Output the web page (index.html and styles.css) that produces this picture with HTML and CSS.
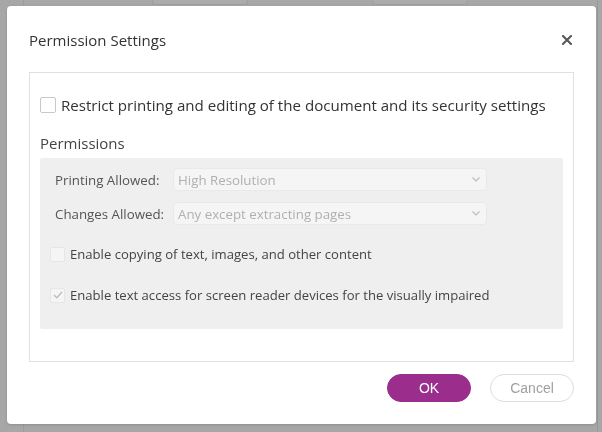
FILE: index.html
```html
<!DOCTYPE html>
<html>
<head>
<meta charset="utf-8">
<link rel="stylesheet" href="styles.css">
</head>
<body>
<div class="page">
  <div class="page-top">
    <div class="ghost-line"></div>
    <div class="ghost-box g1"></div>
    <div class="ghost-box g2"></div>
    <div class="ghost-edge"></div>
  </div>
</div>
<div class="dialog">
  <div class="header">
    <span class="title">Permission Settings</span>
    <span class="close">
      <svg width="10" height="10" viewBox="0 0 10 10"><path d="M1 1 L9 9 M9 1 L1 9" stroke="#555" stroke-width="2" stroke-linecap="square"/></svg>
    </span>
  </div>
  <div class="box">
    <label class="row main-check">
      <span class="cb"></span>
      <span>Restrict printing and editing of the document and its security settings</span>
    </label>
    <div class="section-title">Permissions</div>
    <div class="panel">
      <div class="field">
        <span class="field-label">Printing Allowed:</span>
        <div class="select"><span>High Resolution</span>
          <svg width="8" height="5" viewBox="0 0 8 5"><path d="M0.5 0.5 L4 4 L7.5 0.5" fill="none" stroke="#bdbdbd" stroke-width="1.2"/></svg>
        </div>
      </div>
      <div class="field second">
        <span class="field-label">Changes Allowed:</span>
        <div class="select"><span>Any except extracting pages</span>
          <svg width="8" height="5" viewBox="0 0 8 5"><path d="M0.5 0.5 L4 4 L7.5 0.5" fill="none" stroke="#bdbdbd" stroke-width="1.2"/></svg>
        </div>
      </div>
      <label class="row sub-check first">
        <span class="cb dis"></span>
        <span>Enable copying of text, images, and other content</span>
      </label>
      <label class="row sub-check second">
        <span class="cb dis">
          <svg width="10" height="8" viewBox="0 0 10 8"><path d="M1 4 L3.8 6.8 L9 1" fill="none" stroke="#bdbdbd" stroke-width="1.4"/></svg>
        </span>
        <span>Enable text access for screen reader devices for the visually impaired</span>
      </label>
    </div>
  </div>
  <div class="footer">
    <button class="btn ok">OK</button>
    <button class="btn cancel">Cancel</button>
  </div>
</div>
</body>
</html>
```
FILE: styles.css
```css
html, body {
  margin: 0;
  padding: 0;
  width: 602px;
  height: 432px;
  overflow: hidden;
}
body {
  background: #a7a7a7;
  font-family: "Open Sans", "Noto Sans", sans-serif;
}
.page {
  width: 602px;
  height: 432px;
}
.page-top {
  display: flex;
  height: 6px;
}
.ghost-line {
  width: 1px;
  height: 432px;
  background: #9c9c9c;
  margin-left: 23px;
}
.ghost-box {
  height: 4px;
  border: 1px solid #9e9e9e;
  border-top: none;
  border-radius: 0 0 4px 4px;
  background: #ababab;
}
.g1 { width: 94px; margin-left: 128px; }
.g2 { width: 94px; margin-left: 124px; }
.ghost-edge {
  width: 1px;
  height: 432px;
  background: #9a9a9a;
  margin-left: 129px;
}

.dialog {
  position: fixed;
  left: 7px;
  top: 6px;
  width: 589px;
  height: 418px;
  background: #fff;
  border-radius: 4px;
  box-sizing: border-box;
  padding: 0 22px;
  box-shadow: 0 1px 3px rgba(0,0,0,0.15);
}
.header {
  height: 66px;
  box-sizing: border-box;
  padding-top: 24px;
  display: flex;
  align-items: flex-start;
  justify-content: space-between;
}
.title {
  font-size: 15px;
  line-height: 20px;
  color: #333;
}
.close {
  display: flex;
  margin-top: 5px;
  margin-right: 2px;
}
.box {
  height: 290px;
  box-sizing: border-box;
  border: 1px solid #e0e0e0;
  padding: 22px 10px 0 10px;
}
.row {
  display: flex;
  align-items: center;
  line-height: 20px;
}
.cb {
  width: 13px;
  height: 13px;
  border: 1px solid #c8c8c8;
  border-radius: 2px;
  background: #fff;
  display: flex;
  align-items: center;
  justify-content: center;
  flex: none;
}
.main-check {
  font-size: 15.1px;
  color: #333;
}
.main-check .cb {
  width: 14px;
  height: 14px;
  margin-right: 5px;
}
.section-title {
  margin-top: 18px;
  font-size: 15px;
  line-height: 20px;
  color: #444;
}
.panel {
  margin-top: 5px;
  height: 171px;
  box-sizing: border-box;
  background: #efefef;
  border-radius: 2px;
  padding: 10px 0 0 0;
}
.field {
  display: flex;
  align-items: center;
  padding-left: 15px;
  font-size: 13.3px;
  color: #555;
}
.field.second {
  margin-top: 11px;
}
.field-label {
  width: 118px;
  flex: none;
}
.select {
  width: 314px;
  height: 23px;
  box-sizing: border-box;
  background: #f5f5f5;
  border: 1px solid #e9e9e9;
  border-radius: 4px;
  display: flex;
  align-items: center;
  justify-content: space-between;
  padding: 0 6px 0 4px;
  color: #b0b0b0;
  font-size: 13.3px;
}
.sub-check {
  padding-left: 10px;
  font-size: 13.1px;
  color: #444;
}
.sub-check.first { margin-top: 19px; }
.sub-check.second { margin-top: 21px; }
.sub-check .cb {
  margin-right: 5px;
}
.cb.dis {
  background: #f5f5f5;
  border-color: #e6e6e6;
}
.footer {
  display: flex;
  justify-content: flex-end;
  gap: 19px;
  margin-top: 12px;
}
.btn {
  width: 84px;
  height: 28px;
  border-radius: 14px;
  font-family: "Liberation Sans", Arial, sans-serif;
  font-size: 14px;
  box-sizing: border-box;
  padding: 0;
  cursor: pointer;
}
.ok {
  background: #9b2d8d;
  border: 1px solid #9b2d8d;
  color: #fff;
}
.cancel {
  background: #fff;
  border: 1px solid #dcdcdc;
  color: #a0a0a0;
}
```
